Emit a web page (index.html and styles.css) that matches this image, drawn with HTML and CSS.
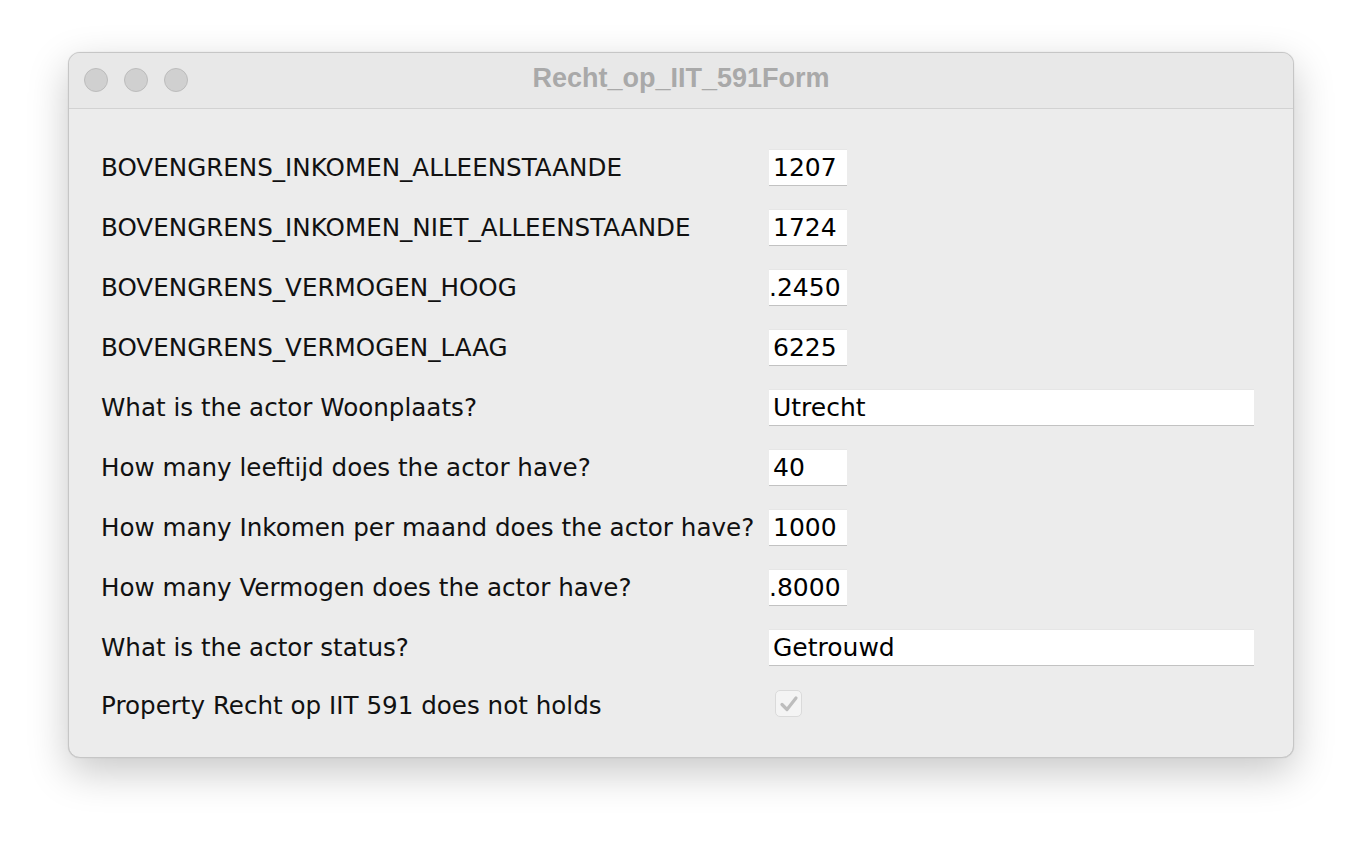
FILE: index.html
```html
<!DOCTYPE html>
<html>
<head>
<meta charset="utf-8">
<link rel="stylesheet" href="styles.css">
</head>
<body>
<div class="window">
  <div class="titlebar">
    <div class="lights"><span class="light"></span><span class="light"></span><span class="light"></span></div>
    <div class="title">Recht_op_IIT_591Form</div>
  </div>
  <div class="content">
    <div class="label">BOVENGRENS_INKOMEN_ALLEENSTAANDE</div>
    <div class="field small">1207</div>
    <div class="label">BOVENGRENS_INKOMEN_NIET_ALLEENSTAANDE</div>
    <div class="field small">1724</div>
    <div class="label">BOVENGRENS_VERMOGEN_HOOG</div>
    <div class="field small clip">.2450</div>
    <div class="label">BOVENGRENS_VERMOGEN_LAAG</div>
    <div class="field small">6225</div>
    <div class="label">What is the actor Woonplaats?</div>
    <div class="field wide">Utrecht</div>
    <div class="label">How many leeftijd does the actor have?</div>
    <div class="field small">40</div>
    <div class="label">How many Inkomen per maand does the actor have?</div>
    <div class="field small">1000</div>
    <div class="label">How many Vermogen does the actor have?</div>
    <div class="field small clip">.8000</div>
    <div class="label">What is the actor status?</div>
    <div class="field wide">Getrouwd</div>
    <div class="label last">Property Recht op IIT 591 does not holds</div>
    <div class="checkcell">
      <span class="checkbox"><svg width="20" height="18" viewBox="0 0 20 18"><path d="M3 9.5 L8 14.5 L17 3" fill="none" stroke="#bdbdbd" stroke-width="3.2" stroke-linecap="round" stroke-linejoin="round"/></svg></span>
    </div>
  </div>
</div>
</body>
</html>
```
FILE: styles.css
```css
html, body {
  margin: 0;
  padding: 0;
  background: #ffffff;
}
body {
  width: 1362px;
  height: 842px;
  font-family: "DejaVu Sans", "Open Sans", sans-serif;
  padding: 52px 0 0 68px;
  box-sizing: border-box;
}
.window {
  width: 1226px;
  height: 706px;
  box-sizing: border-box;
  border: 1px solid #c6c6c6;
  border-radius: 12px;
  background: #ececec;
  box-shadow: 0 14px 40px rgba(0,0,0,0.22), 0 0 1px rgba(0,0,0,0.2);
  overflow: hidden;
  display: flex;
  flex-direction: column;
}
.titlebar {
  height: 55px;
  flex: none;
  background: #e8e8e8;
  border-bottom: 1px solid #d2d2d2;
  display: flex;
  align-items: center;
  position: relative;
}
.lights {
  display: flex;
  gap: 16px;
  padding-left: 15px;
  margin-top: -1px;
}
.light {
  width: 22px;
  height: 22px;
  border-radius: 50%;
  background: #d0d0d0;
  border: 1px solid #bcbcbc;
}
.title {
  position: absolute;
  left: 0;
  right: 0;
  top: 10px;
  text-align: center;
  font-family: "Liberation Sans", "Open Sans", sans-serif;
  font-weight: bold;
  font-size: 27px;
  color: #a9a9a9;
}
.content {
  display: grid;
  grid-template-columns: 668px 1fr;
  grid-auto-rows: 36px;
  row-gap: 24px;
  padding: 40px 39px 0 32px;
}
.label {
  font-size: 24.6px;
  color: #111;
  display: flex;
  align-items: center;
  white-space: nowrap;
}
.field {
  background: #fff;
  font-size: 25px;
  color: #000;
  display: flex;
  align-items: center;
  padding-left: 4px;
  box-sizing: border-box;
  border-top: 1px solid #e6e6e6;
  box-shadow: 0 1px 0 #c2c2c2;
  height: 36px;
  overflow: hidden;
  white-space: nowrap;
}
.field.small { width: 78px; }
.field.clip { padding-left: 0; }
.field.wide { width: 100%; }
.label.last {
  margin-top: -3px;
}
.checkcell {
  display: flex;
  align-items: flex-start;
  padding-left: 6px;
  padding-top: 1px;
}
.checkbox {
  width: 25px;
  height: 25px;
  border: 1px solid #dadada;
  border-radius: 5px;
  background: #f4f4f4;
  display: flex;
  align-items: center;
  justify-content: center;
}
```
